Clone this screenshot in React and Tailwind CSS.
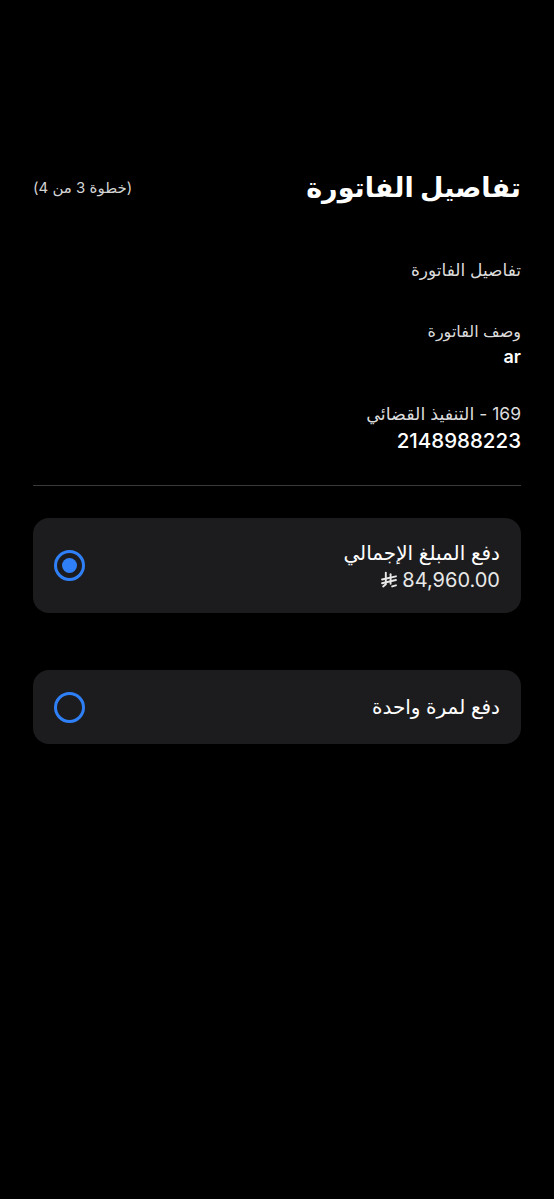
import React from "react";

const font = { fontFamily: '"Inter", "DejaVu Sans", sans-serif' };

function Riyal() {
  return (
    <svg width="16" height="17" viewBox="0 0 15 16" fill="none" stroke="currentColor" strokeWidth="1.8" strokeLinecap="round">
      <path d="M4.5 1.5 V12.5 L2 14.5" />
      <path d="M9 3 V12" />
      <path d="M1 8 L14 5" />
      <path d="M1 11.5 L14 8.5" />
      <path d="M10.5 14.5 L14 13.5" />
    </svg>
  );
}

function Radio({ checked }) {
  return (
    <div className="w-[31px] h-[31px] rounded-full border-[3px] border-[#2f80f7] flex items-center justify-center shrink-0">
      {checked && <div className="w-[15px] h-[15px] rounded-full bg-[#2f80f7]" />}
    </div>
  );
}

export default function App() {
  return (
    <div dir="rtl" style={font} className="min-h-[1199px] w-full bg-black text-white px-[33px] pt-[168px]">
      <div className="flex items-center justify-between">
        <h1 className="text-[27px] font-bold leading-[40px] text-white">تفاصيل الفاتورة</h1>
        <span className="text-[15px] text-[#d4d4d4]">(خطوة 3 من 4)</span>
      </div>

      <div className="mt-[50px] text-[17px] text-[#dcdcdc] leading-[24px]">تفاصيل الفاتورة</div>

      <div className="mt-[36px]">
        <div className="text-[16px] text-[#dcdcdc] leading-[26px]">وصف الفاتورة</div>
        <div className="text-[18px] font-semibold leading-[26px]">ar</div>
      </div>

      <div className="mt-[30px]">
        <div className="text-[17.5px] text-[#dcdcdc] leading-[28px]">169 - التنفيذ القضائي</div>
        <div className="text-[20.5px] font-medium leading-[26px]">2148988223</div>
      </div>

      <div className="mt-[31px] h-px bg-[#3a3a3c]" />

      <div className="mt-[32px] h-[95px] rounded-[16px] bg-[#1c1c1e] px-[21px] flex items-center justify-between">
        <div className="flex flex-col items-start">
          <div className="text-[20px] leading-[28px]">دفع المبلغ الإجمالي</div>
          <div dir="ltr" className="flex items-center gap-[5px] text-[20px] leading-[26px] text-[#e8e8e8]">
            <Riyal />
            <span>84,960.00</span>
          </div>
        </div>
        <Radio checked />
      </div>

      <div className="mt-[57px] h-[74px] rounded-[16px] bg-[#1c1c1e] px-[21px] flex items-center justify-between">
        <div className="text-[20px] leading-[28px]">دفع لمرة واحدة</div>
        <Radio />
      </div>
    </div>
  );
}
